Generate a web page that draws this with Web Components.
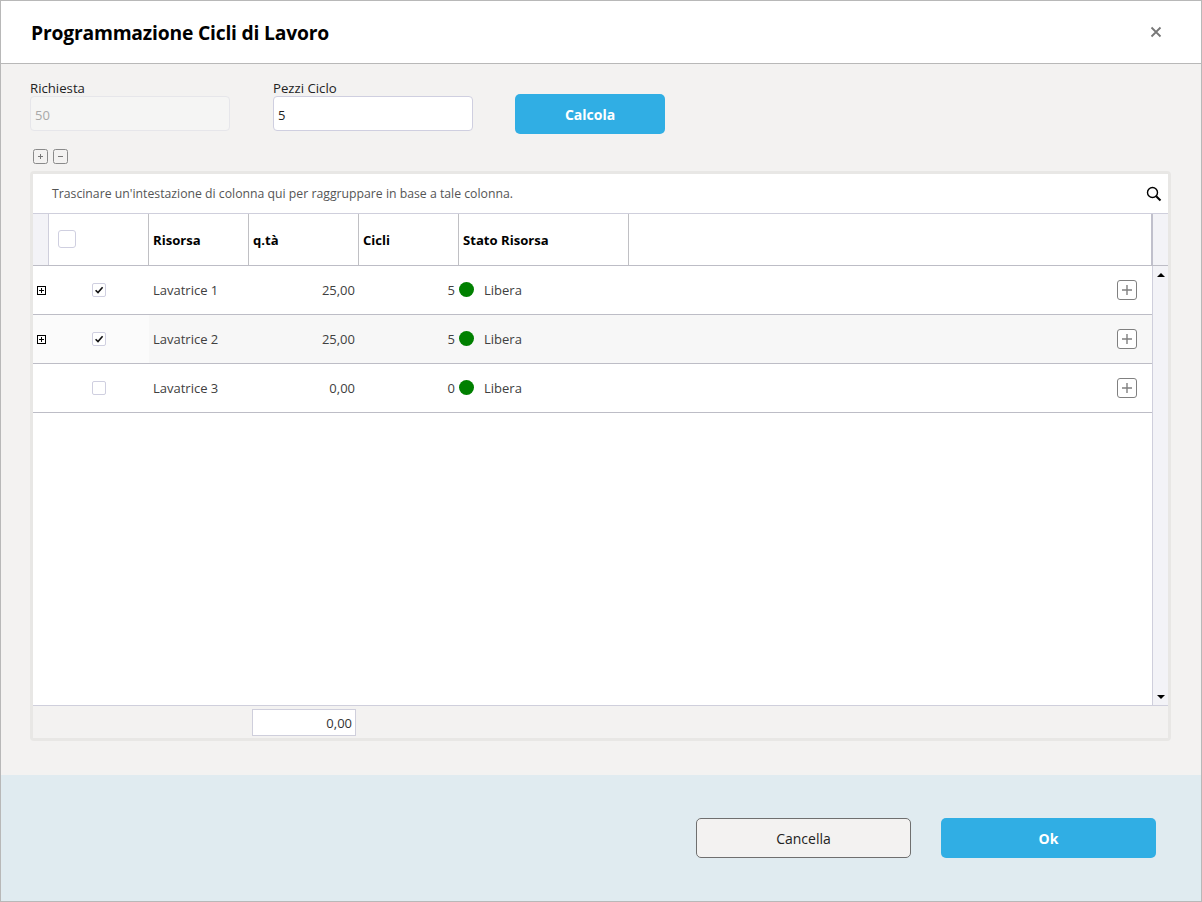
<!DOCTYPE html>
<html lang="it"><head><meta charset="utf-8"><title>Programmazione Cicli di Lavoro</title>
<style>
html,body{margin:0;padding:0;overflow:hidden}
body{font-family:"Open Sans","Noto Sans",sans-serif;width:1202px;height:902px}
</style></head><body>
<app-dialog></app-dialog>
<script>
const FONT='"Open Sans","Noto Sans",sans-serif';
function def(name,html,init){
  customElements.define(name,class extends HTMLElement{
    constructor(){super();this.attachShadow({mode:'open'}).innerHTML=typeof html==='function'?html(this):html;}
    connectedCallback(){ if(init) init(this); }
  });
}
def('dlg-header',`<style>
:host{display:flex;align-items:center;justify-content:space-between;height:62px;background:#fff;border-bottom:1px solid #b8b8b8;padding:0 38px 0 30px;box-sizing:content-box}
h1{margin:0;font:700 19.3px/1 ${FONT};color:#000;letter-spacing:-.2px;padding-top:2px}
svg{display:block}
</style><h1>Programmazione Cicli di Lavoro</h1>
<svg width="14" height="14" viewBox="0 0 14 14"><path d="M2.5 2.5 11.5 11.5M11.5 2.5 2.5 11.5" stroke="#777" stroke-width="1.8" fill="none"/></svg>`);

def('form-field',el=>`<style>
:host{display:flex;flex-direction:column;width:200px}
label{font:13.2px/16px ${FONT};color:#222;height:16px}
.box{box-sizing:border-box;height:35px;width:200px;border:1px solid #cfcfe0;border-radius:4px;background:#fff;font:13px/36px ${FONT};color:#222;padding:0 0 0 4px}
:host([disabled]) .box{background:#f5f5f4;color:#a8a8a8;border-color:#e6e6ea}
</style><label>${el.getAttribute('label')}</label><div class="box">${el.getAttribute('value')}</div>`);

def('action-button',el=>`<style>
:host{display:flex;align-items:center;justify-content:center;box-sizing:border-box;width:var(--w,150px);height:40px;border-radius:5px;background:#30aee4;color:#fff;font:700 14px/1 ${FONT};padding-top:2px}
:host([plain]){background:#f3f2f1;color:#222;border:1px solid #6f6f6f;font-weight:400}
</style><slot></slot>`);

def('mini-box',el=>`<style>
:host{display:block;line-height:0}
</style><svg width="15" height="15" viewBox="0 0 15 15"><rect x=".5" y=".5" width="14" height="14" rx="2" fill="#f3f2f1" stroke="#8a8a8a"/><path d="${el.getAttribute('kind')==='minus'?'M5 7.5H10':'M5 7.5H10M7.5 5V10'}" stroke="#777" fill="none"/></svg>`);

def('check-box',el=>`<style>
:host{display:block;width:14px;height:14px;box-sizing:border-box;border:1px solid #cfcfe0;border-radius:2px;background:#fff;line-height:0}
:host([large]){width:18px;height:18px;border-radius:3px}
svg{display:block}
</style>${el.hasAttribute('checked')?'<svg width="12" height="12" viewBox="0 0 12 12"><path d="M2.6 6.2 5 8.6 9.6 3.2" stroke="#111" stroke-width="1.6" fill="none"/></svg>':''}`);

def('expand-box',`<style>:host{display:block;line-height:0}</style><svg width="9" height="9" viewBox="0 0 9 9"><rect x=".5" y=".5" width="8" height="8" fill="#fff" stroke="#000"/><path d="M2 4.5H7M4.5 2V7" stroke="#000" fill="none"/></svg>`);

def('row-add',`<style>:host{display:block;line-height:0}</style><svg width="20" height="20" viewBox="0 0 20 20"><rect x=".5" y=".5" width="19" height="19" rx="2.5" fill="#fff" stroke="#808080"/><path d="M5 10H15M10 5V15" stroke="#808080" stroke-width="1.4" fill="none"/></svg>`);

def('grid-toolbar',`<style>
:host{display:flex;align-items:center;justify-content:space-between;height:39px;background:#fff;border-bottom:1px solid #cfcfdc;padding:0 6px 0 19px;font:12.25px/1 ${FONT};color:#555}
svg{display:block}
span{padding-top:2px}
</style><span>Trascinare un'intestazione di colonna qui per raggruppare in base a tale colonna.</span>
<svg width="16" height="16" viewBox="0 0 16 16"><circle cx="6.5" cy="6.5" r="5" fill="none" stroke="#000" stroke-width="1.4"/><path d="M10.2 10.2 14.5 14.5" stroke="#000" stroke-width="2"/></svg>`);

const COLS='16px 100px 100px 110px 100px 170px 1fr';
def('grid-head',`<style>
:host{display:grid;grid-template-columns:${COLS};height:51px;background:#fff;border-bottom:1px solid #bdbdc6;font:700 13.1px/1 ${FONT};color:#000;padding-right:15px;position:relative}
div{box-sizing:border-box;border-right:1px solid #c0c0c4;display:flex;align-items:center;padding-left:4px;padding-top:3px}
.ind{background:#f3f3f7;border-right-color:#cfcfdc;padding:0}
.chk{padding:0 0 2px 9px}
.last{border-right:2px solid #c0c0cc}
.sb{position:absolute;right:0;top:0;bottom:0;width:15px;background:#f3f3f7;border:0;padding:0}
</style><div class="ind"></div><div class="chk"><check-box large></check-box></div><div>Risorsa</div><div>q.tà</div><div>Cicli</div><div>Stato Risorsa</div><div class="last"></div><div class="sb"></div>`);

def('grid-row',el=>{
 const a=n=>el.getAttribute(n);
 return `<style>
:host{display:grid;grid-template-columns:${COLS};height:48px;border-bottom:1px solid #bdbdc6;font:13px/1 ${FONT};color:#404040;background:#fff}
:host([alt]){background:#f7f7f7}
div{display:flex;align-items:center;box-sizing:border-box}
.ind{justify-content:flex-start;padding-left:4px;padding-top:1px}
.chk{justify-content:center;padding-right:1px}
:host([alt]) .chk{background:#fbfbfb}
:host([alt]) .ind{background:#fbfbfb}
.name{padding:1px 0 0 4px}
.num{justify-content:flex-end;padding:1px 4px 0 0}
.st{gap:10px}
.st span:last-child{padding-top:1px}
.dot{width:15px;height:15px;border-radius:50%;background:#008000;flex:none;margin-top:-1px}
.act{justify-content:flex-end;padding-right:15px}
</style><div class="ind">${el.hasAttribute('expand')?'<expand-box></expand-box>':''}</div>
<div class="chk"><check-box ${el.hasAttribute('checked')?'checked':''}></check-box></div>
<div class="name">${a('name')}</div><div class="num">${a('qty')}</div><div class="num">${a('cicli')}</div>
<div class="st"><span class="dot"></span><span>Libera</span></div><div class="act"><row-add></row-add></div>`});

def('grid-scroll',`<style>
:host{display:flex;flex-direction:column;justify-content:space-between;align-items:center;box-sizing:border-box;width:16px;flex:none;background:#f3f3f7;border-left:1px solid #cfcfdc;padding:7px 0 6px}
i{display:block;width:0;height:0;border-left:4px solid transparent;border-right:4px solid transparent}
.u{border-bottom:4px solid #000}.d{border-top:4px solid #000}
</style><i class="u"></i><i class="d"></i>`);

def('grid-footer',`<style>
:host{display:block;height:33px;box-sizing:border-box;border-top:1px solid #cfcfdc;background:#f3f2f1;padding:3px 0 0 219px}
div{box-sizing:border-box;width:104px;height:27px;border:1px solid #cfcfdc;background:#fff;font:13px/26px ${FONT};color:#333;text-align:right;padding-right:3px}
</style><div>0,00</div>`);

def('data-grid',`<style>
:host{display:flex;flex-direction:column;box-sizing:border-box;height:570px;border:3px solid #e8e7e5;border-radius:4px;background:#fff}
.main{flex:1;display:flex;min-height:0}
.rows{flex:1;min-width:0;background:#fff}
</style><grid-toolbar></grid-toolbar><grid-head></grid-head>
<section class="main"><div class="rows">
<grid-row expand checked name="Lavatrice 1" qty="25,00" cicli="5"></grid-row>
<grid-row expand checked alt name="Lavatrice 2" qty="25,00" cicli="5"></grid-row>
<grid-row name="Lavatrice 3" qty="0,00" cicli="0"></grid-row>
</div><grid-scroll></grid-scroll></section><grid-footer></grid-footer>`);

def('dlg-body',`<style>
:host{display:block;height:711px;box-sizing:border-box;background:#f3f2f1;padding:16px 30px 0 29px}
.form{display:flex;align-items:flex-start;height:53px}
.form form-field+form-field{margin-left:43px}
action-button{margin:14px 0 0 42px}
.tools{display:flex;gap:5px;margin:16px 0 7px 3px;height:15px}
</style><div class="form"><form-field disabled label="Richiesta" value="50"></form-field><form-field label="Pezzi Ciclo" value="5"></form-field><action-button>Calcola</action-button></div>
<div class="tools"><mini-box></mini-box><mini-box kind="minus"></mini-box></div>
<data-grid></data-grid>`);

def('dlg-footer',`<style>
:host{display:flex;flex:1;justify-content:flex-end;align-items:flex-start;gap:30px;background:#e0ebf0;padding:43px 45px 0 0}
</style><action-button plain style="--w:215px">Cancella</action-button><action-button style="--w:215px">Ok</action-button>`);

def('app-dialog',`<style>
:host{display:flex;flex-direction:column;box-sizing:border-box;width:1202px;height:902px;border:1px solid #b8b8b8;overflow:hidden;background:#fff}
</style><dlg-header></dlg-header><dlg-body></dlg-body><dlg-footer></dlg-footer>`);
</script>
</body></html>
